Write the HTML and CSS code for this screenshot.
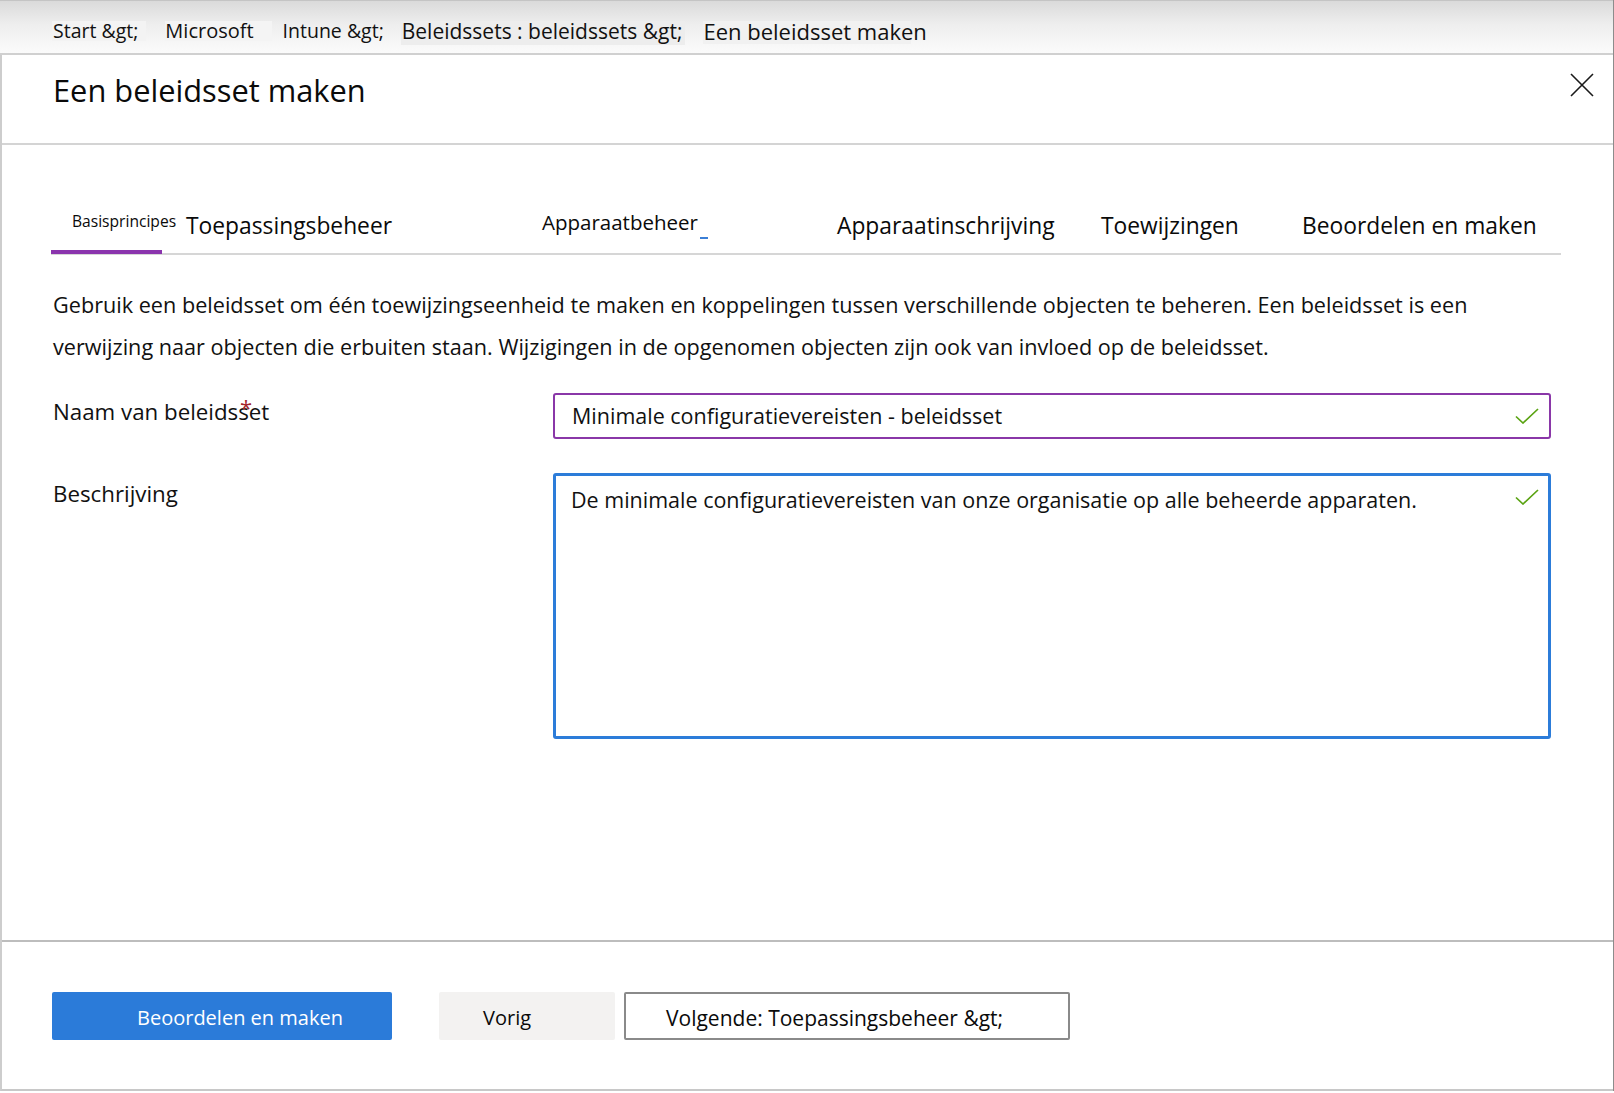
FILE: index.html
```html
<!DOCTYPE html>
<html lang="nl">
<head>
<meta charset="utf-8">
<title>Een beleidsset maken</title>
<link rel="stylesheet" href="styles.css">
</head>
<body>
<div class="portal">
  <div class="topbar">
    <nav class="crumbs">
      <span class="crumb c-start">Start &amp;gt;</span>
      <span class="crumb c-ms">Microsoft</span>
      <span class="crumb c-intune">Intune &amp;gt;</span>
      <span class="crumb c-sets">Beleidssets : beleidssets &amp;gt;</span>
      <span class="crumb c-current">Een beleidsset maken</span>
    </nav>
  </div>
  <div class="blade">
    <header class="blade-head">
      <h1 class="blade-title">Een beleidsset maken</h1>
      <button class="close" aria-label="Sluiten">
        <svg width="24" height="24" viewBox="0 0 24 24"><path d="M1 1 L23 23 M23 1 L1 23" stroke="#1a1a1a" stroke-width="1.6" fill="none"/></svg>
      </button>
    </header>
    <main class="blade-body">
      <div class="tabs">
        <span class="tab tab-small active">Basisprincipes</span>
        <span class="tab tab-big">Toepassingsbeheer</span>
        <span class="tab tab-mid">Apparaatbeheer<span class="dash"></span></span>
        <span class="tab tab-big">Apparaatinschrijving</span>
        <span class="tab tab-big">Toewijzingen</span>
        <span class="tab tab-big">Beoordelen en maken</span>
      </div>
      <p class="intro">Gebruik een beleidsset om één toewijzingseenheid te maken en koppelingen tussen verschillende objecten te beheren. Een beleidsset is een verwijzing naar objecten die erbuiten staan. Wijzigingen in de opgenomen objecten zijn ook van invloed op de beleidsset.</p>
      <div class="form">
        <label class="field-label">Naam van beleidsset<span class="req">*</span></label>
        <div class="textbox">
          <span class="value">Minimale configuratievereisten - beleidsset</span>
          <svg class="check" width="24" height="16" viewBox="0 0 24 16"><path d="M1 8.5 L8 15 L23 1" stroke="#5aa312" stroke-width="1.7" fill="none"/></svg>
        </div>
        <label class="field-label field-label-2">Beschrijving</label>
        <div class="textarea">
          <span class="value">De minimale configuratievereisten van onze organisatie op alle beheerde apparaten.</span>
          <svg class="check" width="24" height="16" viewBox="0 0 24 16"><path d="M1 8.5 L8 15 L23 1" stroke="#5aa312" stroke-width="1.7" fill="none"/></svg>
        </div>
      </div>
    </main>
    <footer class="blade-foot">
      <button class="btn btn-primary">Beoordelen en maken</button>
      <button class="btn btn-prev">Vorig</button>
      <button class="btn btn-next">Volgende: Toepassingsbeheer &amp;gt;</button>
    </footer>
  </div>
</div>
</body>
</html>
```
FILE: styles.css
```css
html, body {
  margin: 0;
  padding: 0;
  background: #ffffff;
}
body {
  font-family: "Open Sans", "Noto Sans", sans-serif;
  color: #111111;
  width: 1614px;
  height: 1093px;
  overflow: hidden;
}
.portal {
  width: 1613px;
  height: 1091px;
  border-right: 1px solid #8c8c8c;
  display: flex;
  flex-direction: column;
}
.topbar {
  height: 52px;
  flex: none;
  border-top: 1px solid #c4c4c4;
  border-bottom: 2px solid #d0d0d0;
  background: linear-gradient(to bottom, #dadada 0%, #eeeeee 45%, #fbfbfb 100%);
}
.crumbs {
  display: flex;
  align-items: flex-start;
  padding: 20px 0 0 52px;
  font-size: 19.5px;
  line-height: 20px;
  white-space: nowrap;
}
.crumb {
  display: block;
}
.c-start {
  background: #f3f3f3;
  padding: 0 8px 0 1px;
  margin-right: 19px;
}
.c-ms {
  font-size: 20px;
  background: #f4f4f4;
  padding: 0 18px 0 0;
  margin-right: 11px;
}
.c-intune {
  margin-right: 17px;
}
.c-sets {
  font-size: 21px;
  background: #ededed;
  padding: 0 3px 4px 1px;
  margin-right: 18px;
}
.c-current {
  font-size: 22px;
  line-height: 20px;
  padding-bottom: 3px;
  background: linear-gradient(to right, #f1f1f1 0%, #f1f1f1 93%, transparent 93%);
}
.blade {
  flex: 1;
  display: flex;
  flex-direction: column;
  border-left: 2px solid #cdcdcd;
  border-bottom: 2px solid #c8c8c8;
}
.blade-head {
  height: 88px;
  flex: none;
  border-bottom: 2px solid #d4d4d4;
  display: flex;
  justify-content: space-between;
  align-items: flex-start;
  padding: 0 19px 0 51px;
}
.blade-title {
  margin: 15px 0 0 0;
  font-weight: 400;
  font-size: 30.8px;
  line-height: 40px;
  color: #0a0a0a;
}
.close {
  margin-top: 18px;
  width: 24px;
  height: 24px;
  padding: 0;
  border: 0;
  background: none;
  display: block;
}
.close svg {
  display: block;
}
.blade-body {
  flex: 1;
  padding: 0 0 0 49px;
}
.tabs {
  margin-top: 66px;
  width: 1510px;
  box-sizing: border-box;
  padding-left: 21px;
  display: grid;
  grid-template-columns: 114px 356px 295px 264px 201px 1fr;
  align-items: end;
  border-bottom: 2px solid #d6d6d6;
  white-space: nowrap;
}
.tab {
  display: block;
  position: relative;
  color: #0a0a0a;
}
.tab-big {
  font-size: 22.8px;
  line-height: 30px;
  padding-bottom: 12px;
}
.tab-small {
  font-size: 15.6px;
  line-height: 20px;
  padding-bottom: 22px;
}
.tab-mid {
  font-size: 20.5px;
  line-height: 22px;
  padding-bottom: 20px;
}
.tab.active::after {
  content: "";
  position: absolute;
  left: -21px;
  bottom: -1px;
  width: 111px;
  height: 4px;
  background: #8a34ad;
}
.dash {
  display: inline-block;
  width: 8px;
  height: 2px;
  margin-left: 2px;
  margin-bottom: -9px;
  background: #3b7fd6;
}
.intro {
  margin: 29px 0 0 2px;
  max-width: 1480px;
  font-size: 21.65px;
  line-height: 42px;
}
.form {
  margin: 25px 0 0 2px;
  display: grid;
  grid-template-columns: 500px 998px;
  row-gap: 34px;
}
.field-label {
  position: relative;
  font-size: 22.3px;
  line-height: 28px;
  padding-top: 5px;
  white-space: nowrap;
}
.field-label-2 {
  padding-top: 7px;
}
.req {
  position: absolute;
  left: 187px;
  top: 0;
  color: #a4262c;
  font-size: 22px;
  line-height: 28px;
}
.textbox {
  height: 46px;
  box-sizing: border-box;
  border: 2px solid #8a37a8;
  border-radius: 3px;
  display: flex;
  align-items: center;
  justify-content: space-between;
  padding: 0 10px 0 17px;
}
.value {
  font-size: 21.5px;
  line-height: 28px;
  white-space: nowrap;
}
.check {
  display: block;
  flex: none;
}
.textarea {
  height: 266px;
  box-sizing: border-box;
  border: 3px solid #2c7cd9;
  border-radius: 3px;
  display: flex;
  align-items: flex-start;
  justify-content: space-between;
  padding: 10px 9px 0 15px;
}
.textarea .check {
  margin-top: 3px;
}
.blade-foot {
  height: 149px;
  flex: none;
  box-sizing: border-box;
  border-top: 2px solid #bdbdbd;
  padding: 50px 0 0 50px;
  display: flex;
  align-items: flex-start;
}
.btn {
  height: 48px;
  box-sizing: border-box;
  font-family: "Open Sans", "Noto Sans", sans-serif;
  font-size: 20px;
  line-height: 28px;
  border-radius: 2px;
  display: flex;
  align-items: center;
  white-space: nowrap;
  color: #0a0a0a;
}
.btn-primary {
  width: 340px;
  background: #2b7bd9;
  color: #ffffff;
  border: 0;
  padding: 3px 0 0 85px;
  margin-right: 47px;
}
.btn-prev {
  width: 176px;
  background: #f3f2f1;
  border: 0;
  padding: 3px 0 0 44px;
  margin-right: 9px;
}
.btn-next {
  width: 446px;
  font-size: 21px;
  background: #ffffff;
  border: 2px solid #8a8a8a;
  padding: 3px 0 0 40px;
}
```
